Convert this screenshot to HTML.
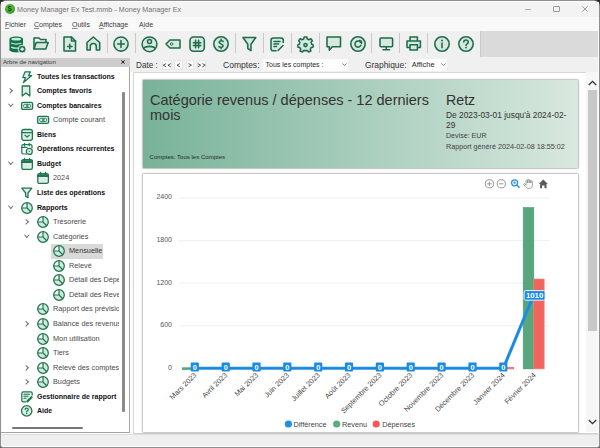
<!DOCTYPE html>
<html><head><meta charset="utf-8">
<style>
*{box-sizing:border-box;margin:0;padding:0}
html,body{width:600px;height:448px;overflow:hidden;background:#2a2a2a;font-family:"Liberation Sans",sans-serif;position:relative}
.a{position:absolute}
.t{position:absolute;white-space:nowrap;line-height:1}
.sep{position:absolute;top:33px;width:1px;height:20px;background:#c9c9c9}
svg{position:absolute;overflow:visible}
u{text-decoration:underline;text-decoration-thickness:0.5px;text-underline-offset:1px;text-decoration-color:#888}
.g{fill:#d9e8df;stroke:#1b6d4b;stroke-width:1.55;stroke-linejoin:round;stroke-linecap:round}
.s{fill:none;stroke:#1b6d4b;stroke-width:1.55;stroke-linejoin:round;stroke-linecap:round}
.tg{fill:#dcefe4;stroke:#1f7653;stroke-linejoin:round;stroke-linecap:round}
.ts{fill:none;stroke:#1f7653;stroke-linejoin:round;stroke-linecap:round}
.row{position:absolute;left:0;width:118px;height:14px;overflow:hidden}
.row span{position:absolute;top:3px;white-space:nowrap;font-size:7px;line-height:8px}
.row .b{font-weight:700;color:#111}
.row .n{color:#4a4a4a;font-size:7.3px}
.chev{position:absolute;top:5px;width:3.6px;height:3.6px;border-right:0.9px solid #707070;border-bottom:0.9px solid #707070}
.chev.r{transform:rotate(-45deg)}
.chev.d{transform:rotate(45deg);top:3.5px}
.tic{position:absolute;top:1px;width:12px;height:12px}
</style></head><body>
<!-- window frame -->
<div class="a" style="left:0;top:0;width:600px;height:448px;background:#8f8f8f;border-radius:6px 6px 2px 2px"></div>
<div class="a" style="left:1px;top:1px;width:598px;height:446px;background:#fdfdfd;border-radius:5px 5px 2px 2px"></div>
<!-- title bar -->
<div class="a" style="left:1px;top:2px;width:598px;height:15px;background:#f3f3f3"></div>
<div class="a" style="left:4.8px;top:4.1px;width:9.8px;height:9.8px;border-radius:50%;background:radial-gradient(circle at 45% 40%,#6fcf4a 0%,#3fa52c 60%,#2e8a22 100%)"></div>
<div class="t" style="left:7.6px;top:5.3px;font-size:7.5px;font-weight:700;color:#14460e">$</div>
<div class="t" style="left:17px;top:6px;font-size:7.2px;color:#727272">Money Manager Ex Test.mmb - Money Manager Ex</div>
<div class="a" style="left:524.5px;top:8.5px;width:6.5px;height:1px;background:#a8a8a8"></div>
<div class="a" style="left:553px;top:6px;width:6.5px;height:6px;border:0.8px solid #999;border-radius:1px"></div>
<svg style="left:582px;top:6px" width="6" height="6" viewBox="0 0 6 6"><path d="M0.2,0.2 L5.8,5.8 M5.8,0.2 L0.2,5.8" stroke="#8a8a8a" stroke-width="0.8"/></svg>
<!-- menu -->
<div class="a" style="left:1px;top:17px;width:597px;height:14px;background:#f9f9f9"></div>
<div class="t" style="left:5px;top:21px;font-size:7px;color:#3a3a3a"><u>F</u>ichier</div>
<div class="t" style="left:34px;top:21px;font-size:7px;color:#3a3a3a"><u>C</u>omptes</div>
<div class="t" style="left:72px;top:21px;font-size:7px;color:#3a3a3a"><u>O</u>utils</div>
<div class="t" style="left:99px;top:21px;font-size:7px;color:#3a3a3a"><u>A</u>ffichage</div>
<div class="t" style="left:139px;top:21px;font-size:7px;color:#3a3a3a">A<u>i</u>de</div>
<!-- toolbar -->
<div class="a" style="left:1px;top:31px;width:479px;height:26px;background:#f0f0f0"></div>
<div class="a" style="left:480.3px;top:30.7px;width:118px;height:26px;background:#dadada;border-left:0.8px solid #cacaca"></div>
<!-- separators -->
<div class="sep" style="left:55px"></div>
<div class="sep" style="left:107px"></div>
<div class="sep" style="left:135px"></div>
<div class="sep" style="left:235px"></div>
<div class="sep" style="left:263px"></div>
<div class="sep" style="left:291px"></div>
<div class="sep" style="left:319px"></div>
<div class="sep" style="left:371px"></div>
<div class="sep" style="left:399px"></div>
<div class="sep" style="left:427px"></div>
<!-- 1 database -->
<svg style="left:8.8px;top:35.6px" width="17" height="17" viewBox="0 0 16 16">
 <path d="M0.4,3 C0.4,-0.3 13.2,-0.3 13.2,3 L13.2,13 C13.2,16.3 0.4,16.3 0.4,13 Z" fill="#17704a"/>
 <ellipse cx="6.8" cy="3" rx="4.6" ry="1.3" fill="#bff0d4"/>
 <path d="M2,6.6 Q6.8,8.6 11.6,6.6 M2,10.4 Q5.5,12 9,11.2" stroke="#bff0d4" stroke-width="1.2" fill="none"/>
 <circle cx="12.4" cy="12.4" r="3.7" fill="#17704a" stroke="#f0f0f0" stroke-width="0.9"/>
 <path d="M12.4,10.6 V14.2 M10.6,12.4 H14.2" stroke="#fff" stroke-width="1.05"/>
</svg>
<!-- 2 folder -->
<svg style="left:33px;top:37px" width="16" height="13" viewBox="0 0 16 13">
 <path d="M1,12 V1 H6 L7.5,2.5 H13 V5" class="s" stroke-width="1.8"/>
 <path d="M1,12 L3.2,5.5 H15.2 L12.8,12 Z" class="g" stroke-width="1.8" fill="#d8e8de"/>
</svg>
<!-- 3 doc plus -->
<svg style="left:63px;top:36px" width="14" height="16" viewBox="0 0 14 16">
 <path d="M1,1 H8.5 L12.5,5 V15 H1 Z" class="g"/>
 <path d="M8.5,1 V5 H12.5" class="s" stroke-width="1.2"/>
 <path d="M6.8,8.3 V12.7 M4.6,10.5 H9" class="s" stroke-width="1.5"/>
</svg>
<!-- 4 home -->
<svg style="left:86px;top:36px" width="15" height="15" viewBox="0 0 15 15">
 <path d="M1,6.5 L7.3,1 L13.7,6.5 V14 H10.3 V10.5 A3,3 0 0 0 4.3,10.5 V14 H1 Z" class="g"/>
</svg>
<!-- 5 plus circle -->
<svg style="left:113px;top:36px" width="16" height="16" viewBox="0 0 16 16">
 <circle cx="8" cy="8" r="7.1" class="g"/>
 <path d="M8,4.6 V11.4 M4.6,8 H11.4" class="s"/>
</svg>
<!-- 6 person -->
<svg style="left:141px;top:36px" width="17" height="17" viewBox="0 0 17 17">
 <circle cx="8.5" cy="8.3" r="7.4" class="g"/>
 <circle cx="8.5" cy="5.4" r="2" class="s" stroke-width="1.25"/>
 <path d="M2.6,12.6 C4.5,9.6 12.5,9.6 14.4,12.6" class="s" stroke-width="1.25"/>
</svg>
<!-- 7 tag -->
<svg style="left:165.3px;top:38.8px" width="16" height="10" viewBox="0 0 16 10">
 <path d="M1,5 L5,1 H15 V9 H5 Z" class="g" stroke-width="1.6"/>
 <circle cx="6.6" cy="5" r="1.25" fill="#eef6f1" stroke="#1b6d4b" stroke-width="1"/>
</svg>
<!-- 8 hash -->
<svg style="left:189px;top:36px" width="16" height="16" viewBox="0 0 16 16">
 <rect x="1" y="1" width="14.3" height="14.3" rx="3.5" class="g"/>
 <path d="M6.6,4.2 V11.8 M9.6,4.2 V11.8 M4.4,6.7 H11.8 M4.4,9.5 H11.8" class="s" stroke-width="1.1"/>
</svg>
<!-- 9 dollar -->
<svg style="left:213px;top:36px" width="16" height="16" viewBox="0 0 16 16">
 <circle cx="8" cy="8" r="7.2" class="g"/>
 <path d="M10.1,5.6 C9.7,4.5 6.1,4.3 6.1,6.3 C6.1,8 10.1,7.8 10.1,9.8 C10.1,11.8 6.4,11.7 5.9,10.5 M8,3.3 V4.6 M8,11.2 V12.6" class="s" stroke-width="1.2"/>
</svg>
<!-- 10 funnel -->
<svg style="left:242px;top:36px" width="15" height="16" viewBox="0 0 15 16">
 <path d="M1,1.5 H13.8 L9,8.2 V14.6 L5.8,12.5 V8.2 Z" class="g"/>
</svg>
<!-- 11 report edit -->
<svg style="left:270px;top:37px" width="15" height="15" viewBox="0 0 15 15">
 <path d="M6,13.8 H3.3 C2,13.8 1,12.8 1,11.5 V3.3 C1,2 2,1 3.3,1 H11 C12.3,1 13.3,2 13.3,3.3 V5.5" class="g"/>
 <path d="M4,4.5 H10 M4,7 H8.5 M4,9.5 H6.5" class="s" stroke-width="1.2"/>
 <path d="M8,13.5 L13,8.5" class="s" stroke-width="2.4"/>
</svg>
<!-- 12 gear -->
<svg style="left:297px;top:36px" width="17" height="17" viewBox="0 0 17 17">
 <path d="M7.2,1 H9.8 L10.3,3 L12,3.8 L13.8,2.8 L15.3,4.7 L14.1,6.4 L14.6,8.1 L16.2,8.9 L16,11.2 L14.1,11.6 L13.3,13.1 L13.9,15 L11.7,16 L10.4,14.6 H6.6 L5.3,16 L3.1,15 L3.7,13.1 L2.9,11.6 L1,11.2 L0.8,8.9 L2.4,8.1 L2.9,6.4 L1.7,4.7 L3.2,2.8 L5,3.8 L6.7,3 Z" class="g" stroke-width="1.5"/>
 <circle cx="8.5" cy="9" r="1.6" class="s" stroke-width="1.4"/>
</svg>
<!-- 13 chat -->
<svg style="left:326px;top:36px" width="16" height="16" viewBox="0 0 16 16">
 <path d="M1,1 H14.5 V10.8 H6.2 L3.3,14.2 V10.8 H1 Z" class="g"/>
</svg>
<!-- 14 refresh -->
<svg style="left:350px;top:36px" width="16" height="16" viewBox="0 0 16 16">
 <circle cx="8" cy="8" r="7.2" class="g"/>
 <path d="M10.6,6.2 A3.1,3.1 0 1 0 10.9,9.3" class="s" stroke-width="1.6"/>
 <path d="M9.3,4.6 L11.4,5.2 L11.6,7.4" class="s" stroke-width="1.5"/>
</svg>
<!-- 15 monitor -->
<svg style="left:379px;top:37px" width="15" height="14" viewBox="0 0 15 14">
 <rect x="1" y="1" width="12.6" height="8.8" rx="1" class="g"/>
 <path d="M7.3,10 V12.6 M4,12.8 H10.6" class="s" stroke-width="1.5"/>
</svg>
<!-- 16 printer -->
<svg style="left:406px;top:36px" width="16" height="15" viewBox="0 0 16 15">
 <path d="M4,5 V1 H11.4 V5" class="g" stroke-width="1.5"/>
 <path d="M3.8,11.5 H1 V5 H14.4 V11.5 H11.6" class="g" stroke-width="1.6"/>
 <rect x="4" y="8.8" width="7.4" height="5.2" class="g" stroke-width="1.5"/>
</svg>
<!-- 17 info -->
<svg style="left:434px;top:36px" width="16" height="16" viewBox="0 0 16 16">
 <circle cx="8" cy="8" r="7.2" class="g"/>
 <path d="M8,7 V11.8" class="s" stroke-width="1.8"/>
 <circle cx="8" cy="4.6" r="1" fill="#1b6d4b"/>
</svg>
<!-- 18 help -->
<svg style="left:458px;top:36px" width="16" height="16" viewBox="0 0 16 16">
 <circle cx="8" cy="8" r="7.2" class="g"/>
 <path d="M5.8,6.1 C5.8,3.4 10.3,3.4 10.3,6 C10.3,7.8 8,7.8 8,9.4" class="s" stroke-width="1.5"/>
 <circle cx="8" cy="11.6" r="0.95" fill="#1b6d4b"/>
</svg>
<!-- tree panel -->
<div class="a" style="left:1px;top:57px;width:129px;height:376px;background:#f0f0f0"></div>
<div class="a" style="left:1px;top:57.7px;width:129px;height:9px;background:#cccccc"></div>
<div class="t" style="left:3px;top:59px;font-size:6.1px;color:#3a3a3a">Arbre de navigation</div>
<svg style="left:121px;top:59.8px" width="4" height="4" viewBox="0 0 4 4"><path d="M0.3,0.3 L3.7,3.7 M3.7,0.3 L0.3,3.7" stroke="#222" stroke-width="1"/></svg>
<div class="a" style="left:1px;top:66.7px;width:129px;height:366.8px;background:#fff;border-right:1px solid #a4a4a4;border-bottom:1px solid #a4a4a4"></div>
<div class="a" style="left:1px;top:67px;width:121px;height:352px;overflow:hidden">
<div class="row" style="top:2.60px"><svg class="tic" style="left:20px" width="12" height="12" viewBox="0 0 12 12"><path d="M4,0.8 H9.5 L7.6,4.6 H10.8 L2.5,11.6 L4.6,6.6 H1.8 Z" class="tg" stroke-width="1.25"/></svg><span class="b" style="left:36px">Toutes les transactions</span></div>
<div class="row" style="top:17.15px"><div class="chev r" style="left:7.2px"></div><svg class="tic" style="left:20px" width="12" height="12" viewBox="0 0 12 12"><path d="M1.2,1 H8.8 V11 L5,8 L1.2,11 Z" class="tg" stroke-width="1.3"/></svg><span class="b" style="left:36px">Comptes favoris</span></div>
<div class="row" style="top:31.70px"><div class="chev d" style="left:8.2px"></div><svg class="tic" style="left:20px" width="12" height="12" viewBox="0 0 12 12"><rect x="0.6" y="2.4" width="11" height="7" rx="1.4" class="tg" stroke-width="1.35"/><rect x="2.7" y="4.3" width="6.8" height="3.2" rx="1" fill="#f4faf6" stroke="#1f7653" stroke-width="0.9"/><circle cx="6.1" cy="5.9" r="0.9" class="ts" stroke-width="0.9"/></svg><span class="b" style="left:36px">Comptes bancaires</span></div>
<div class="row" style="top:46.25px"><svg class="tic" style="left:36px" width="12" height="12" viewBox="0 0 12 12"><rect x="0.6" y="2.4" width="11" height="7" rx="1.4" class="tg" stroke-width="1.35"/><rect x="2.7" y="4.3" width="6.8" height="3.2" rx="1" fill="#f4faf6" stroke="#1f7653" stroke-width="0.9"/><circle cx="6.1" cy="5.9" r="0.9" class="ts" stroke-width="0.9"/></svg><span class="n" style="left:52px">Compte courant</span></div>
<div class="row" style="top:60.80px"><svg class="tic" style="left:20px" width="12" height="12" viewBox="0 0 12 12"><rect x="0.8" y="0.5" width="10.6" height="10.8" rx="2" class="tg" stroke-width="1.3"/><path d="M0.8,3.6 H11.4" class="ts" stroke-width="1.2"/><path d="M4,6.2 L6.1,8 L8.2,6.2" class="ts" stroke-width="1.2"/></svg><span class="b" style="left:36px">Biens</span></div>
<div class="row" style="top:75.35px"><svg class="tic" style="left:20px" width="12" height="12" viewBox="0 0 12 12"><path d="M5.5,11 H2.2 C1.4,11 0.8,10.4 0.8,9.6 V3 C0.8,2.2 1.4,1.6 2.2,1.6 H9.6 C10.4,1.6 11,2.2 11,3 V5" class="ts" stroke-width="1.2"/><path d="M3.5,0.3 V2.8 M8.2,0.3 V2.8 M0.8,4.3 H6" class="ts" stroke-width="1.2"/><circle cx="8.3" cy="8.4" r="3" class="tg" stroke-width="1.2"/><circle cx="8.3" cy="8.4" r="0.6" fill="#1f7653"/></svg><span class="b" style="left:36px">Opérations récurrentes</span></div>
<div class="row" style="top:89.90px"><div class="chev d" style="left:8.2px"></div><svg class="tic" style="left:20px" width="12" height="12" viewBox="0 0 12 12"><rect x="0.8" y="1.6" width="10.6" height="9.8" rx="1.6" class="tg" stroke-width="1.3"/><path d="M0.8,4.4 H11.4 M1,3 H11.2" class="ts" stroke-width="1.4"/><path d="M3.6,0.3 V2.6 M8.6,0.3 V2.6" class="ts" stroke-width="1.2"/></svg><span class="b" style="left:36px">Budget</span></div>
<div class="row" style="top:104.45px"><svg class="tic" style="left:36px" width="12" height="12" viewBox="0 0 12 12"><rect x="0.8" y="1.6" width="10.6" height="9.8" rx="1.6" class="tg" stroke-width="1.3"/><path d="M0.8,4.4 H11.4 M1,3 H11.2" class="ts" stroke-width="1.4"/><path d="M3.6,0.3 V2.6 M8.6,0.3 V2.6" class="ts" stroke-width="1.2"/></svg><span class="n" style="left:52px">2024</span></div>
<div class="row" style="top:119.00px"><svg class="tic" style="left:20px" width="12" height="12" viewBox="0 0 12 12"><path d="M0.8,1.2 H10.8 L7,6 V10.8 L4.6,9.2 V6 Z" class="tg" stroke-width="1.3"/></svg><span class="b" style="left:36px">Liste des opérations</span></div>
<div class="row" style="top:133.55px"><div class="chev d" style="left:8.2px"></div><svg class="tic" style="left:20px" width="12" height="12" viewBox="0 0 12 12"><circle cx="6" cy="6" r="5.3" fill="#cfe9da"/><path d="M6,6 V0.9 A5.3,5.3 0 0 0 0.7,6 Z" fill="#f0f8f3"/><circle cx="6" cy="6" r="5.3" class="ts" stroke-width="1.25"/><path d="M6,0.8 V6 H0.7 M6,6 L9.8,9.7" class="ts" stroke-width="1.2"/></svg><span class="b" style="left:36px">Rapports</span></div>
<div class="row" style="top:148.10px"><div class="chev r" style="left:23.2px"></div><svg class="tic" style="left:36px" width="12" height="12" viewBox="0 0 12 12"><circle cx="6" cy="6" r="5.3" fill="#cfe9da"/><path d="M6,6 V0.9 A5.3,5.3 0 0 0 0.7,6 Z" fill="#f0f8f3"/><circle cx="6" cy="6" r="5.3" class="ts" stroke-width="1.25"/><path d="M6,0.8 V6 H0.7 M6,6 L9.8,9.7" class="ts" stroke-width="1.2"/></svg><span class="n" style="left:52px">Trésorerie</span></div>
<div class="row" style="top:162.65px"><div class="chev d" style="left:24.2px"></div><svg class="tic" style="left:36px" width="12" height="12" viewBox="0 0 12 12"><circle cx="6" cy="6" r="5.3" fill="#cfe9da"/><path d="M6,6 V0.9 A5.3,5.3 0 0 0 0.7,6 Z" fill="#f0f8f3"/><circle cx="6" cy="6" r="5.3" class="ts" stroke-width="1.25"/><path d="M6,0.8 V6 H0.7 M6,6 L9.8,9.7" class="ts" stroke-width="1.2"/></svg><span class="n" style="left:52px">Catégories</span></div>
<div class="a" style="left:50px;top:176.60px;width:52px;height:15px;background:#d9d9d9"></div><div class="row" style="top:177.20px"><svg class="tic" style="left:52px" width="12" height="12" viewBox="0 0 12 12"><circle cx="6" cy="6" r="5.3" fill="#cfe9da"/><path d="M6,6 V0.9 A5.3,5.3 0 0 0 0.7,6 Z" fill="#f0f8f3"/><circle cx="6" cy="6" r="5.3" class="ts" stroke-width="1.25"/><path d="M6,0.8 V6 H0.7 M6,6 L9.8,9.7" class="ts" stroke-width="1.2"/></svg><span class="n" style="left:68px;color:#333">Mensuelle</span></div>
<div class="row" style="top:191.75px"><svg class="tic" style="left:52px" width="12" height="12" viewBox="0 0 12 12"><circle cx="6" cy="6" r="5.3" fill="#cfe9da"/><path d="M6,6 V0.9 A5.3,5.3 0 0 0 0.7,6 Z" fill="#f0f8f3"/><circle cx="6" cy="6" r="5.3" class="ts" stroke-width="1.25"/><path d="M6,0.8 V6 H0.7 M6,6 L9.8,9.7" class="ts" stroke-width="1.2"/></svg><span class="n" style="left:68px">Relevé</span></div>
<div class="row" style="top:206.30px"><svg class="tic" style="left:52px" width="12" height="12" viewBox="0 0 12 12"><circle cx="6" cy="6" r="5.3" fill="#cfe9da"/><path d="M6,6 V0.9 A5.3,5.3 0 0 0 0.7,6 Z" fill="#f0f8f3"/><circle cx="6" cy="6" r="5.3" class="ts" stroke-width="1.25"/><path d="M6,0.8 V6 H0.7 M6,6 L9.8,9.7" class="ts" stroke-width="1.2"/></svg><span class="n" style="left:68px">Détail des Dépenses</span></div>
<div class="row" style="top:220.85px"><svg class="tic" style="left:52px" width="12" height="12" viewBox="0 0 12 12"><circle cx="6" cy="6" r="5.3" fill="#cfe9da"/><path d="M6,6 V0.9 A5.3,5.3 0 0 0 0.7,6 Z" fill="#f0f8f3"/><circle cx="6" cy="6" r="5.3" class="ts" stroke-width="1.25"/><path d="M6,0.8 V6 H0.7 M6,6 L9.8,9.7" class="ts" stroke-width="1.2"/></svg><span class="n" style="left:68px">Détail des Revenus</span></div>
<div class="row" style="top:235.40px"><svg class="tic" style="left:36px" width="12" height="12" viewBox="0 0 12 12"><circle cx="6" cy="6" r="5.3" fill="#cfe9da"/><path d="M6,6 V0.9 A5.3,5.3 0 0 0 0.7,6 Z" fill="#f0f8f3"/><circle cx="6" cy="6" r="5.3" class="ts" stroke-width="1.25"/><path d="M6,0.8 V6 H0.7 M6,6 L9.8,9.7" class="ts" stroke-width="1.2"/></svg><span class="n" style="left:52px">Rapport des prévisions</span></div>
<div class="row" style="top:249.95px"><div class="chev r" style="left:23.2px"></div><svg class="tic" style="left:36px" width="12" height="12" viewBox="0 0 12 12"><circle cx="6" cy="6" r="5.3" fill="#cfe9da"/><path d="M6,6 V0.9 A5.3,5.3 0 0 0 0.7,6 Z" fill="#f0f8f3"/><circle cx="6" cy="6" r="5.3" class="ts" stroke-width="1.25"/><path d="M6,0.8 V6 H0.7 M6,6 L9.8,9.7" class="ts" stroke-width="1.2"/></svg><span class="n" style="left:52px">Balance des revenus</span></div>
<div class="row" style="top:264.50px"><svg class="tic" style="left:36px" width="12" height="12" viewBox="0 0 12 12"><circle cx="6" cy="6" r="5.3" fill="#cfe9da"/><path d="M6,6 V0.9 A5.3,5.3 0 0 0 0.7,6 Z" fill="#f0f8f3"/><circle cx="6" cy="6" r="5.3" class="ts" stroke-width="1.25"/><path d="M6,0.8 V6 H0.7 M6,6 L9.8,9.7" class="ts" stroke-width="1.2"/></svg><span class="n" style="left:52px">Mon utilisation</span></div>
<div class="row" style="top:279.05px"><svg class="tic" style="left:36px" width="12" height="12" viewBox="0 0 12 12"><circle cx="6" cy="6" r="5.3" fill="#cfe9da"/><path d="M6,6 V0.9 A5.3,5.3 0 0 0 0.7,6 Z" fill="#f0f8f3"/><circle cx="6" cy="6" r="5.3" class="ts" stroke-width="1.25"/><path d="M6,0.8 V6 H0.7 M6,6 L9.8,9.7" class="ts" stroke-width="1.2"/></svg><span class="n" style="left:52px">Tiers</span></div>
<div class="row" style="top:293.60px"><div class="chev r" style="left:23.2px"></div><svg class="tic" style="left:36px" width="12" height="12" viewBox="0 0 12 12"><circle cx="6" cy="6" r="5.3" fill="#cfe9da"/><path d="M6,6 V0.9 A5.3,5.3 0 0 0 0.7,6 Z" fill="#f0f8f3"/><circle cx="6" cy="6" r="5.3" class="ts" stroke-width="1.25"/><path d="M6,0.8 V6 H0.7 M6,6 L9.8,9.7" class="ts" stroke-width="1.2"/></svg><span class="n" style="left:52px">Relevé des comptes</span></div>
<div class="row" style="top:308.15px"><div class="chev r" style="left:23.2px"></div><svg class="tic" style="left:36px" width="12" height="12" viewBox="0 0 12 12"><circle cx="6" cy="6" r="5.3" fill="#cfe9da"/><path d="M6,6 V0.9 A5.3,5.3 0 0 0 0.7,6 Z" fill="#f0f8f3"/><circle cx="6" cy="6" r="5.3" class="ts" stroke-width="1.25"/><path d="M6,0.8 V6 H0.7 M6,6 L9.8,9.7" class="ts" stroke-width="1.2"/></svg><span class="n" style="left:52px">Budgets</span></div>
<div class="row" style="top:322.70px"><svg class="tic" style="left:20px" width="12" height="12" viewBox="0 0 12 12"><path d="M4.6,10.8 H2.2 C1.4,10.8 0.8,10.2 0.8,9.4 V2.2 C0.8,1.4 1.4,0.8 2.2,0.8 H9.8 C10.6,0.8 11.2,1.4 11.2,2.2 V4" class="tg" stroke-width="1.2"/><path d="M3,3.3 H8.4 M3,5.3 H7 M3,7.3 H5" class="ts" stroke-width="1.1"/><path d="M6.4,10.4 L10.6,6.2" class="ts" stroke-width="2.2"/></svg><span class="b" style="left:36px">Gestionnaire de rapport</span></div>
<div class="row" style="top:337.25px"><svg class="tic" style="left:20px" width="12" height="12" viewBox="0 0 12 12"><circle cx="5.7" cy="5.9" r="5.2" class="tg" stroke-width="1.3"/><path d="M4.1,4.6 C4.1,2.7 7.3,2.7 7.3,4.5 C7.3,5.8 5.7,5.8 5.7,7" class="ts" stroke-width="1.15"/><circle cx="5.7" cy="8.6" r="0.75" fill="#1f7653"/></svg><span class="b" style="left:36px">Aide</span></div>
</div>
<div class="a" style="left:122px;top:92px;width:2.5px;height:320px;background:#8a8a8a;border-radius:1px"></div>
<div class="a" style="left:12px;top:427px;width:71px;height:2.2px;background:#777;border-radius:1px"></div><!-- main toolbar -->
<div class="a" style="left:130px;top:57px;width:468px;height:15px;background:#f0f0f0"></div>
<div class="t" style="left:135.8px;top:60.3px;font-size:9.4px;color:#333;transform:scaleX(0.87);transform-origin:0 0">Date :</div>
<div class="a" style="left:162px;top:59.6px;width:10px;height:10.8px;background:#fbfbfb;border:0.5px solid #e6e6e6;border-radius:1px"></div>
<div class="a" style="left:174px;top:59.6px;width:8.8px;height:10.8px;background:#fbfbfb;border:0.5px solid #e6e6e6;border-radius:1px"></div>
<div class="a" style="left:185.6px;top:59.6px;width:8.6px;height:10.8px;background:#fbfbfb;border:0.5px solid #e6e6e6;border-radius:1px"></div>
<div class="a" style="left:196.8px;top:59.6px;width:9.3px;height:10.8px;background:#fbfbfb;border:0.5px solid #e6e6e6;border-radius:1px"></div>
<svg style="left:0;top:0" width="600" height="448" viewBox="0 0 600 448"><path d="M166.1,63.6 L163.2,65.2 L166.1,66.8 M170.8,63.6 L167.9,65.2 L170.8,66.8 M179.9,63.6 L177.0,65.2 L179.9,66.8 M188.5,63.6 L191.4,65.2 L188.5,66.8 M197.8,63.6 L200.7,65.2 L197.8,66.8 M202.4,63.6 L205.3,65.2 L202.4,66.8" fill="none" stroke="#3a3a3a" stroke-width="0.85"/></svg>
<div class="t" style="left:223px;top:60.3px;font-size:9.4px;color:#333;transform:scaleX(0.91);transform-origin:0 0">Comptes:</div>
<div class="a" style="left:263px;top:58.5px;width:85px;height:12px;background:#fdfdfd;border-radius:1px"></div>
<div class="t" style="left:265.5px;top:61px;font-size:7px;color:#2a2a2a">Tous les comptes :</div>
<svg style="left:341.5px;top:63px" width="5" height="3" viewBox="0 0 5 3"><path d="M0.4,0.4 L2.5,2.5 L4.6,0.4" fill="none" stroke="#555" stroke-width="0.7"/></svg>
<div class="t" style="left:364.7px;top:60.3px;font-size:9.4px;color:#333;transform:scaleX(0.895);transform-origin:0 0">Graphique:</div>
<div class="a" style="left:409.5px;top:58.5px;width:37px;height:12px;background:#fdfdfd;border-radius:1px"></div>
<div class="t" style="left:411.8px;top:61px;font-size:7.5px;color:#2a2a2a">Affiche</div>
<svg style="left:440.5px;top:63px" width="5" height="3" viewBox="0 0 5 3"><path d="M0.4,0.4 L2.5,2.5 L4.6,0.4" fill="none" stroke="#555" stroke-width="0.7"/></svg>
<!-- content area -->
<div class="a" style="left:133px;top:72px;width:465px;height:361.5px;background:#fff;border-top:1px solid #d6d6d6;border-left:1px solid #d6d6d6;border-bottom:1px solid #d0d0d0"></div>
<!-- header card -->
<div class="a" style="left:142.5px;top:80px;width:435.7px;height:88px;background:linear-gradient(90deg,#78b299 0%,#d8e8df 100%);box-shadow:0 0 0 0.7px rgba(0,0,0,0.16),0 0 2.5px rgba(0,0,0,0.32)"></div>
<div class="t" style="left:150px;top:92.5px;font-size:14.5px;line-height:15.3px;color:#333;white-space:normal;width:290px">Catégorie revenus / dépenses - 12 derniers mois</div>
<div class="t" style="left:149.6px;top:154.4px;font-size:6.05px;color:#1f2f27">Comptes: Tous les Comptes</div>
<div class="t" style="left:446px;top:92.5px;font-size:14.2px;color:#333">Retz</div>
<div class="t" style="left:446px;top:110px;font-size:8.4px;line-height:10px;color:#333;white-space:normal;width:125px">De 2023-03-01 jusqu'à 2024-02-29</div>
<div class="t" style="left:446px;top:133px;font-size:7.1px;color:#444">Devise: EUR</div>
<div class="t" style="left:446px;top:142.7px;font-size:7.2px;color:#444">Rapport généré 2024-02-08 18:55:02</div>
<!-- chart card -->
<div class="a" style="left:142.5px;top:173.5px;width:435.7px;height:258px;background:#fff;box-shadow:0 0 0 0.7px rgba(0,0,0,0.16),0 0 2.5px rgba(0,0,0,0.32)"></div>
<!-- main scrollbar -->
<div class="a" style="left:586px;top:72px;width:12px;height:360px;background:#f6f6f6"></div>
<svg style="left:588px;top:80px" width="9" height="6" viewBox="0 0 9 6"><path d="M0.8,5 L4.5,1.3 L8.2,5" fill="none" stroke="#333" stroke-width="1.3"/></svg>
<div class="a" style="left:588px;top:89.5px;width:8.7px;height:241.5px;background:#c8c8c8"></div>
<svg style="left:588px;top:418.5px" width="9" height="6" viewBox="0 0 9 6"><path d="M0.8,1 L4.5,4.7 L8.2,1" fill="none" stroke="#333" stroke-width="1.3"/></svg>
<!-- status bar -->
<div class="a" style="left:1px;top:433.5px;width:598px;height:12.5px;background:#efefef;border-top:1px solid #dedede"></div>
<svg style="left:0;top:0" width="600" height="448" viewBox="0 0 600 448">
<line x1="179" y1="198.1" x2="549.5" y2="198.1" stroke="#eeeeee" stroke-width="1"/>
<text x="172" y="199.4" text-anchor="end" font-size="7" fill="#555" font-family="Liberation Sans">2400</text>
<line x1="179" y1="240.7" x2="549.5" y2="240.7" stroke="#eeeeee" stroke-width="1"/>
<text x="172" y="242.0" text-anchor="end" font-size="7" fill="#555" font-family="Liberation Sans">1800</text>
<line x1="179" y1="283.2" x2="549.5" y2="283.2" stroke="#eeeeee" stroke-width="1"/>
<text x="172" y="284.5" text-anchor="end" font-size="7" fill="#555" font-family="Liberation Sans">1200</text>
<line x1="179" y1="325.8" x2="549.5" y2="325.8" stroke="#eeeeee" stroke-width="1"/>
<text x="172" y="327.1" text-anchor="end" font-size="7" fill="#555" font-family="Liberation Sans">600</text>
<text x="172" y="369.6" text-anchor="end" font-size="7" fill="#555" font-family="Liberation Sans">0</text>
<rect x="182" y="367.3" width="9" height="2.6" fill="#56a87c"/>
<rect x="506" y="366.9" width="8" height="2.4" fill="#f07a72"/>
<rect x="523.2" y="207.6" width="10.6" height="161.3" fill="#58a67c" stroke="#4d9a70" stroke-width="0.6"/>
<rect x="533.8" y="279.0" width="10.4" height="89.9" fill="#f0655d" stroke="#f2847d" stroke-width="0.6"/>
<polyline points="194.8,368.3 225.7,368.3 256.5,368.3 287.4,368.3 318.2,368.3 349.1,368.3 379.9,368.3 410.8,368.3 441.6,368.3 472.5,368.3 503.3,368.3 533.5,295.3" fill="none" stroke="#2090e6" stroke-width="3.1" stroke-linejoin="round"/><polyline points="194.8,368.3 225.7,368.3 256.5,368.3 287.4,368.3 318.2,368.3 349.1,368.3 379.9,368.3 410.8,368.3 441.6,368.3 472.5,368.3 503.3,368.3 533.5,295.3" fill="none" stroke="#1a7fcf" stroke-width="1" stroke-linejoin="round" opacity="0.6"/>
<rect x="190.7" y="362.6" width="8.2" height="9" rx="1" fill="#1a8be5"/>
<text x="194.8" y="369.9" text-anchor="middle" font-size="7.4" font-weight="700" fill="#fff" font-family="Liberation Sans">0</text>
<rect x="221.6" y="362.6" width="8.2" height="9" rx="1" fill="#1a8be5"/>
<text x="225.7" y="369.9" text-anchor="middle" font-size="7.4" font-weight="700" fill="#fff" font-family="Liberation Sans">0</text>
<rect x="252.4" y="362.6" width="8.2" height="9" rx="1" fill="#1a8be5"/>
<text x="256.5" y="369.9" text-anchor="middle" font-size="7.4" font-weight="700" fill="#fff" font-family="Liberation Sans">0</text>
<rect x="283.2" y="362.6" width="8.2" height="9" rx="1" fill="#1a8be5"/>
<text x="287.4" y="369.9" text-anchor="middle" font-size="7.4" font-weight="700" fill="#fff" font-family="Liberation Sans">0</text>
<rect x="314.1" y="362.6" width="8.2" height="9" rx="1" fill="#1a8be5"/>
<text x="318.2" y="369.9" text-anchor="middle" font-size="7.4" font-weight="700" fill="#fff" font-family="Liberation Sans">0</text>
<rect x="344.9" y="362.6" width="8.2" height="9" rx="1" fill="#1a8be5"/>
<text x="349.1" y="369.9" text-anchor="middle" font-size="7.4" font-weight="700" fill="#fff" font-family="Liberation Sans">0</text>
<rect x="375.8" y="362.6" width="8.2" height="9" rx="1" fill="#1a8be5"/>
<text x="379.9" y="369.9" text-anchor="middle" font-size="7.4" font-weight="700" fill="#fff" font-family="Liberation Sans">0</text>
<rect x="406.6" y="362.6" width="8.2" height="9" rx="1" fill="#1a8be5"/>
<text x="410.8" y="369.9" text-anchor="middle" font-size="7.4" font-weight="700" fill="#fff" font-family="Liberation Sans">0</text>
<rect x="437.5" y="362.6" width="8.2" height="9" rx="1" fill="#1a8be5"/>
<text x="441.6" y="369.9" text-anchor="middle" font-size="7.4" font-weight="700" fill="#fff" font-family="Liberation Sans">0</text>
<rect x="468.4" y="362.6" width="8.2" height="9" rx="1" fill="#1a8be5"/>
<text x="472.5" y="369.9" text-anchor="middle" font-size="7.4" font-weight="700" fill="#fff" font-family="Liberation Sans">0</text>
<rect x="499.2" y="362.6" width="8.2" height="9" rx="1" fill="#1a8be5"/>
<text x="503.3" y="369.9" text-anchor="middle" font-size="7.4" font-weight="700" fill="#fff" font-family="Liberation Sans">0</text>
<rect x="524.1" y="290.6" width="21" height="9.6" rx="1.5" fill="#1a8be5" stroke="#fff" stroke-width="0.9"/>
<text x="534.6" y="298.3" text-anchor="middle" font-size="7.8" font-weight="700" fill="#fff" font-family="Liberation Sans">1010</text>
<text x="197.0" y="375.6" text-anchor="end" font-size="7.3" fill="#484848" font-family="Liberation Sans" transform="rotate(-45 197.0 375.6)">Mars 2023</text>
<text x="227.8" y="375.6" text-anchor="end" font-size="7.3" fill="#484848" font-family="Liberation Sans" transform="rotate(-45 227.8 375.6)">Avril 2023</text>
<text x="258.7" y="375.6" text-anchor="end" font-size="7.3" fill="#484848" font-family="Liberation Sans" transform="rotate(-45 258.7 375.6)">Mai 2023</text>
<text x="289.6" y="375.6" text-anchor="end" font-size="7.3" fill="#484848" font-family="Liberation Sans" transform="rotate(-45 289.6 375.6)">Juin 2023</text>
<text x="320.4" y="375.6" text-anchor="end" font-size="7.3" fill="#484848" font-family="Liberation Sans" transform="rotate(-45 320.4 375.6)">Juillet 2023</text>
<text x="351.2" y="375.6" text-anchor="end" font-size="7.3" fill="#484848" font-family="Liberation Sans" transform="rotate(-45 351.2 375.6)">Août 2023</text>
<text x="382.1" y="375.6" text-anchor="end" font-size="7.3" fill="#484848" font-family="Liberation Sans" transform="rotate(-45 382.1 375.6)">Septembre 2023</text>
<text x="412.9" y="375.6" text-anchor="end" font-size="7.3" fill="#484848" font-family="Liberation Sans" transform="rotate(-45 412.9 375.6)">Octobre 2023</text>
<text x="443.8" y="375.6" text-anchor="end" font-size="7.3" fill="#484848" font-family="Liberation Sans" transform="rotate(-45 443.8 375.6)">Novembre 2023</text>
<text x="474.7" y="375.6" text-anchor="end" font-size="7.3" fill="#484848" font-family="Liberation Sans" transform="rotate(-45 474.7 375.6)">Décembre 2023</text>
<text x="505.5" y="375.6" text-anchor="end" font-size="7.3" fill="#484848" font-family="Liberation Sans" transform="rotate(-45 505.5 375.6)">Janvier 2024</text>
<text x="536.4" y="375.6" text-anchor="end" font-size="7.3" fill="#484848" font-family="Liberation Sans" transform="rotate(-45 536.4 375.6)">Février 2024</text>
<circle cx="288.4" cy="424" r="3.6" fill="#1e8ee6"/>
<text x="293.4" y="426.6" font-size="7.3" fill="#444" font-family="Liberation Sans">Différence</text>
<circle cx="336.7" cy="424" r="3.6" fill="#56ad83"/>
<text x="342" y="426.6" font-size="7.3" fill="#444" font-family="Liberation Sans">Revenu</text>
<circle cx="376.2" cy="424" r="3.6" fill="#ef5b55"/>
<text x="382.2" y="426.6" font-size="7.3" fill="#444" font-family="Liberation Sans">Dépenses</text>
<circle cx="489.4" cy="183.8" r="4.1" fill="none" stroke="#8a8a8a" stroke-width="0.9"/><path d="M489.4,181.6 V186 M487.2,183.8 H491.6" stroke="#8a8a8a" stroke-width="0.9"/>
<circle cx="501.3" cy="183.8" r="4.1" fill="none" stroke="#8a8a8a" stroke-width="0.9"/><path d="M499.1,183.8 H503.5" stroke="#8a8a8a" stroke-width="0.9"/>
<circle cx="514.6" cy="182.8" r="3" fill="none" stroke="#2a8fe0" stroke-width="1.3"/><path d="M516.8,185 L519.5,187.7" stroke="#2a8fe0" stroke-width="1.5"/><path d="M514.6,181.4 V184.2 M513.2,182.8 H516" stroke="#2a8fe0" stroke-width="0.8"/>
<path d="M526,185.2 V181 a0.8,0.8 0 0 1 1.6,0 V183 V180.1 a0.8,0.8 0 0 1 1.6,0 V183 V180.6 a0.8,0.8 0 0 1 1.6,0 V183 V181.6 a0.8,0.8 0 0 1 1.6,0 V185.5 C532.4,187.5 531,188.4 529.5,188.4 H528.2 C527,188.4 526.2,187.8 525.4,186.8 L523.9,184.8 C523.4,184.1 524.3,183.3 525,183.9 Z" fill="#f6f6f6" stroke="#8a8a8a" stroke-width="0.75" stroke-linejoin="round"/>
<path d="M538.8,184 L543.3,179.6 L547.8,184 H546.5 V188.2 H544.5 V185.5 H542.1 V188.2 H540.1 V184 Z" fill="#5a5a5a"/>
</svg></body></html>
